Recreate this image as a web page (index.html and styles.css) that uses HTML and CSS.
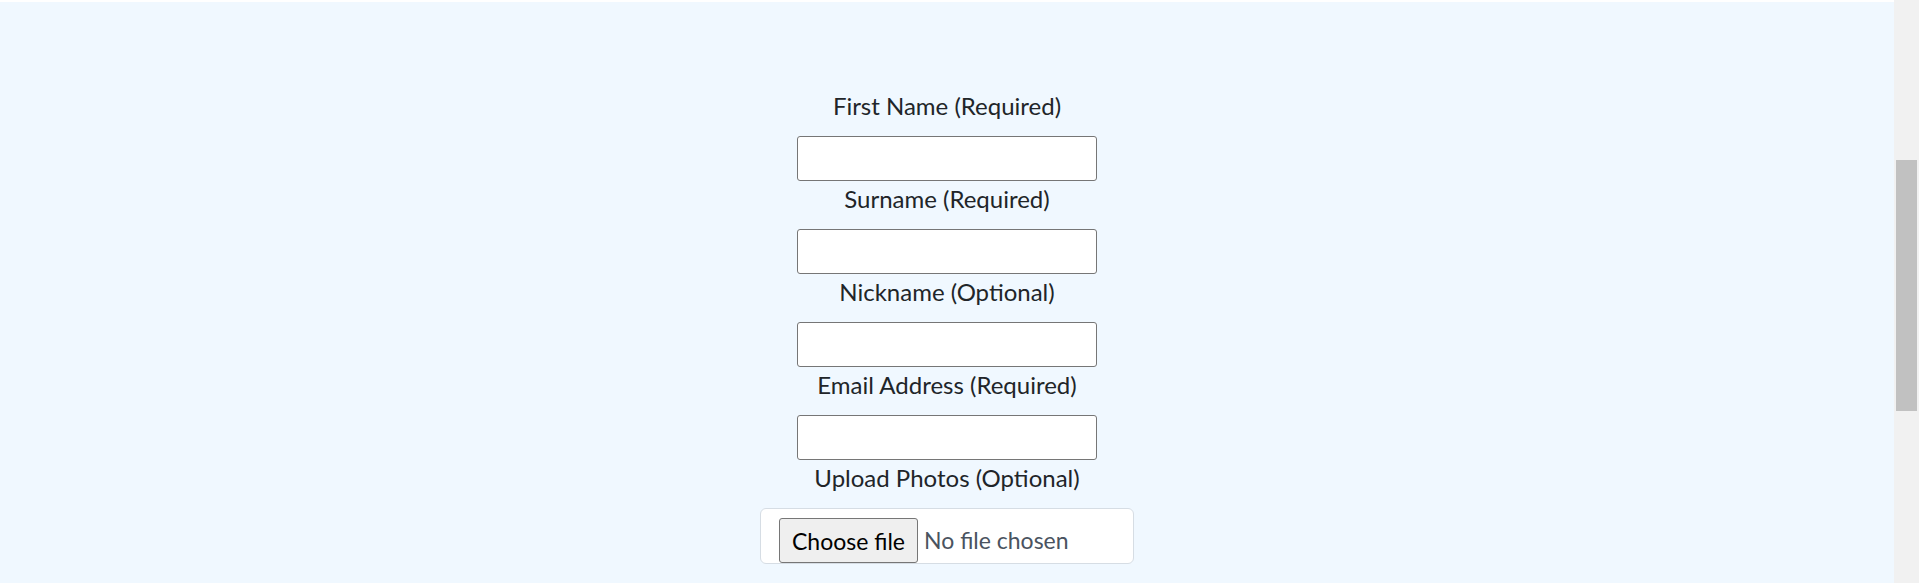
FILE: index.html
```html
<!DOCTYPE html>
<html lang="en">
<head>
<meta charset="utf-8">
<title>Sign up</title>
<link rel="stylesheet" href="styles.css">
</head>
<body>
<div class="window">
  <main class="page">
    <form class="form">
      <label class="label" for="first">First Name (Required)</label>
      <input class="field" id="first" type="text">
      <label class="label" for="surname">Surname (Required)</label>
      <input class="field" id="surname" type="text">
      <label class="label" for="nick">Nickname (Optional)</label>
      <input class="field" id="nick" type="text">
      <label class="label" for="email">Email Address (Required)</label>
      <input class="field" id="email" type="email">
      <label class="label" for="photos">Upload Photos (Optional)</label>
      <div class="file" id="photos">
        <button class="file-btn" type="button">Choose file</button>
        <span class="file-name">No file chosen</span>
      </div>
    </form>
  </main>
  <div class="scrollbar"><div class="thumb"></div></div>
</div>
</body>
</html>
```
FILE: styles.css
```css
html, body {
  margin: 0;
  padding: 0;
  height: 100%;
  overflow: hidden;
}
body {
  font-family: Lato, "Liberation Sans", sans-serif;
  color: #212529;
  background: #ffffff;
}
.window {
  display: flex;
  height: 583px;
}
.page {
  flex: 1;
  margin-top: 2px;
  background: #f0f8ff;
}
.form {
  display: flex;
  flex-direction: column;
  align-items: center;
  padding-top: 86px;
}
.label {
  display: block;
  font-size: 24px;
  line-height: 36px;
  text-align: center;
  margin-bottom: 12px;
}
.field {
  display: block;
  box-sizing: border-box;
  width: 300px;
  height: 45px;
  margin: 0;
  border: 1px solid #767676;
  border-radius: 3px;
  background: #ffffff;
}
.file {
  display: flex;
  align-items: flex-start;
  box-sizing: border-box;
  width: 374px;
  height: 56px;
  padding: 9px 0 0 18px;
  border: 1px solid #d6dde4;
  border-radius: 6px;
  background: #ffffff;
  overflow: hidden;
}
.file-btn {
  box-sizing: border-box;
  height: 45px;
  padding: 0 12px;
  margin: 0 6px 0 0;
  border: 1px solid #767676;
  border-radius: 3px;
  background: #efefef;
  color: #000000;
  font-family: Lato, "Liberation Sans", sans-serif;
  font-size: 23px;
}
.file-name {
  font-size: 23px;
  line-height: 45px;
  color: #4a5360;
}
.scrollbar {
  width: 25px;
  background: #f1f1f1;
  padding: 160px 2px 0 2px;
  box-sizing: border-box;
}
.thumb {
  height: 251px;
  background: #c1c1c1;
}
```
